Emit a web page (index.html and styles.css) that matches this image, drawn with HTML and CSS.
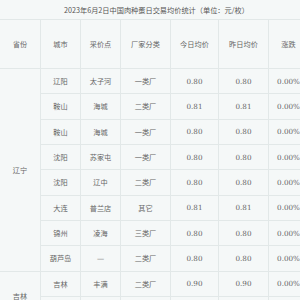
FILE: index.html
```html
<!DOCTYPE html>
<html lang="zh">
<head>
<meta charset="utf-8">
<link rel="stylesheet" href="styles.css">
</head>
<body>
<table class="price-table">
  <colgroup>
    <col class="c1"><col class="c2"><col class="c3"><col class="c4"><col class="c5"><col class="c6"><col class="c7">
  </colgroup>
  <tr class="title-row"><td colspan="7" class="title">2023年6月2日中国肉种蛋日交易均价统计（单位：元/枚）</td></tr>
  <tr class="head-row">
    <td>省份</td><td>城市</td><td>采价点</td><td>厂家分类</td><td>今日均价</td><td>昨日均价</td><td>涨跌</td>
  </tr>
  <tr><td rowspan="8">辽宁</td><td>辽阳</td><td>太子河</td><td>一类厂</td><td>0.80</td><td>0.80</td><td>0.00%</td></tr>
  <tr><td>鞍山</td><td>海城</td><td>二类厂</td><td>0.81</td><td>0.81</td><td>0.00%</td></tr>
  <tr><td>鞍山</td><td>海城</td><td>一类厂</td><td>0.80</td><td>0.80</td><td>0.00%</td></tr>
  <tr><td>沈阳</td><td>苏家屯</td><td>一类厂</td><td>0.80</td><td>0.80</td><td>0.00%</td></tr>
  <tr><td>沈阳</td><td>辽中</td><td>二类厂</td><td>0.80</td><td>0.80</td><td>0.00%</td></tr>
  <tr><td>大连</td><td>普兰店</td><td>其它</td><td>0.81</td><td>0.81</td><td>0.00%</td></tr>
  <tr><td>锦州</td><td>凌海</td><td>三类厂</td><td>0.80</td><td>0.80</td><td>0.00%</td></tr>
  <tr><td>葫芦岛</td><td>—</td><td>二类厂</td><td>0.80</td><td>0.80</td><td>0.00%</td></tr>
  <tr><td rowspan="2">吉林</td><td>吉林</td><td>丰满</td><td>二类厂</td><td>0.90</td><td>0.90</td><td>0.00%</td></tr>
  <tr><td></td><td></td><td></td><td></td><td></td><td></td></tr>
</table>
</body>
</html>
```
FILE: styles.css
```css
html, body {
  margin: 0;
  padding: 0;
  overflow: hidden;
  background: #f5f8f8;
}
.price-table {
  table-layout: fixed;
  width: 309px;
  border-collapse: separate;
  border-spacing: 0;
  font-family: "DejaVu Serif", "Noto Sans CJK SC", serif;
  font-size: 7.2px;
  color: #666;
}
.c1 { width: 41px; }
.c2 { width: 40px; }
.c3 { width: 40px; }
.c4 { width: 50px; }
.c5 { width: 48px; }
.c6 { width: 50px; }
.c7 { width: 40px; }
.price-table td {
  padding: 0;
  text-align: center;
  vertical-align: middle;
  border-right: 1px solid #e2e8e8;
  border-bottom: 1px solid #e2e8e8;
  white-space: nowrap;
}
.price-table tr { height: 25.33px; }
.price-table .title-row { height: 20px; }
.price-table .head-row { height: 49px; }
.price-table td.title {
  border-right: none;
  font-family: "Noto Sans CJK SC", sans-serif;
  color: #555;
  padding-left: 4px;
}
```
